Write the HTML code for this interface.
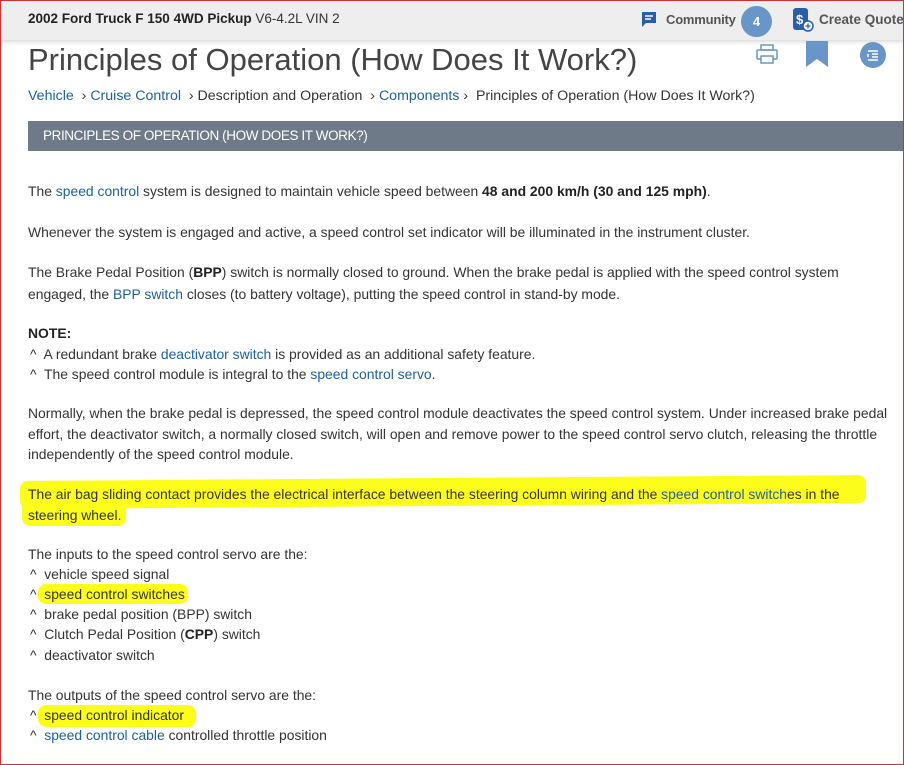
<!DOCTYPE html>
<html><head><style>
body{margin:0;width:904px;height:765px;overflow:hidden;background:#fff;font-family:"Liberation Sans",sans-serif;color:#333;position:relative}
.frame{position:absolute;left:0;top:0;width:902px;height:763px;border:1px solid #d03030;z-index:10;pointer-events:none}
.top{position:absolute;left:0;top:0;width:904px;height:40px;background:#eeeeee;box-shadow:0 2px 4px rgba(0,0,0,.15)}
.t{position:absolute;white-space:nowrap;font-size:13.9px;line-height:20px}
a{color:#1d5f9c;text-decoration:none}
.hl{position:absolute;background:#fdfd1c;border-radius:8px}
b{font-weight:bold;color:#222}
</style></head><body>
<div class="frame"></div>
<div class="top"></div>
<div class="t" style="left:28px;top:9px;font-size:13.5px;color:#333"><b>2002 Ford Truck F 150 4WD Pickup</b> V6-4.2L VIN 2</div>
<svg style="position:absolute;left:640px;top:10px" width="20" height="20" viewBox="0 0 20 20"><path d="M2 2h14v11H6l-4 4z" fill="#2a5ea8"/><path d="M5 6h8M5 9h6" stroke="#fff" stroke-width="1.5"/></svg>
<div class="t" style="left:666px;top:10px;font-weight:bold;color:#555;font-size:13px;letter-spacing:-0.2px">Community</div>
<div style="position:absolute;left:741px;top:6px;width:31px;height:31px;border-radius:50%;background:#6a95c9;color:#fff;font-size:13px;font-weight:bold;text-align:center;line-height:31px">4</div>
<svg style="position:absolute;left:791px;top:7px" width="26" height="26" viewBox="0 0 26 26"><rect x="2" y="1" width="15" height="22" rx="3" fill="#2a5ea8"/><text x="5" y="17" fill="#fff" font-size="13" font-family="Liberation Sans" font-weight="bold">$</text><circle cx="17" cy="19" r="5" fill="#fff" stroke="#2a5ea8" stroke-width="1.5"/><path d="M17 16.5v5M14.5 19h5" stroke="#2a5ea8" stroke-width="1.3"/></svg>
<div class="t" style="left:819px;top:10px;font-weight:bold;color:#555;font-size:13.5px">Create Quote</div>
<div class="t" style="left:28px;top:40px;font-size:31px;line-height:40px;font-weight:300;color:#444">Principles of Operation (How Does It Work?)</div>
<svg style="position:absolute;left:756px;top:44px" width="22" height="20" viewBox="0 0 22 20"><rect x="5" y="1" width="12" height="5" fill="none" stroke="#6a95c9" stroke-width="1.5"/><rect x="1" y="6" width="20" height="9" rx="1" fill="none" stroke="#6a95c9" stroke-width="1.5"/><rect x="5" y="12" width="12" height="7" fill="#fff" stroke="#6a95c9" stroke-width="1.5"/></svg>
<svg style="position:absolute;left:806px;top:41px" width="22" height="26" viewBox="0 0 22 26"><path d="M0 0h22v26l-11-8-11 8z" fill="#6a95c9"/></svg>
<div style="position:absolute;left:860px;top:42px;width:26px;height:26px;border-radius:50%;background:#6a95c9"></div>
<svg style="position:absolute;left:866px;top:48px" width="14" height="14" viewBox="0 0 14 14"><path d="M2 3h10M6 6h6M6 9h6M2 12h10M2 6v3" stroke="#fff" stroke-width="1.5"/></svg>
<div class="t" style="left:28px;top:86px;color:#333;font-size:14.2px"><a>Vehicle</a> &nbsp;&#x203A; <a>Cruise Control</a> &nbsp;&#x203A; Description and Operation &nbsp;&#x203A; <a>Components</a> &#x203A;&nbsp; Principles of Operation (How Does It Work?)</div>
<div style="position:absolute;left:28px;top:121px;width:876px;height:30px;background:#6e7a87"></div>
<div class="t" style="left:43px;top:126px;color:#fff;font-size:13.5px;letter-spacing:-0.4px">PRINCIPLES OF OPERATION (HOW DOES IT WORK?)</div>

<div class="hl" style="left:20px;top:478px;width:846px;height:28px;transform:rotate(-0.4deg)"></div>
<div class="hl" style="left:22px;top:500px;width:104px;height:26px"></div>
<div class="hl" style="left:38px;top:584px;width:150px;height:20px"></div>
<div class="hl" style="left:38px;top:705px;width:158px;height:22px"></div>

<div class="t" style="left:28px;top:181px">The <a>speed control</a> system is designed to maintain vehicle speed between <b>48 and 200 km/h (30 and 125 mph)</b>.</div>
<div class="t" style="left:28px;top:222px">Whenever the system is engaged and active, a speed control set indicator will be illuminated in the instrument cluster.</div>
<div class="t" style="left:28px;top:262px">The Brake Pedal Position (<b>BPP</b>) switch is normally closed to ground. When the brake pedal is applied with the speed control system</div>
<div class="t" style="left:28px;top:284px">engaged, the <a>BPP switch</a> closes (to battery voltage), putting the speed control in stand-by mode.</div>
<div class="t" style="left:28px;top:323px"><b>NOTE:</b></div>
<div class="t" style="left:30px;top:344px">^&nbsp; A redundant brake <a>deactivator switch</a> is provided as an additional safety feature.</div>
<div class="t" style="left:30px;top:364px">^&nbsp; The speed control module is integral to the <a>speed control servo</a>.</div>
<div class="t" style="left:28px;top:403px">Normally, when the brake pedal is depressed, the speed control module deactivates the speed control system. Under increased brake pedal</div>
<div class="t" style="left:28px;top:424px">effort, the deactivator switch, a normally closed switch, will open and remove power to the speed control servo clutch, releasing the throttle</div>
<div class="t" style="left:28px;top:444px">independently of the speed control module.</div>
<div class="t" style="left:28px;top:484px">The air bag sliding contact provides the electrical interface between the steering column wiring and the <a>speed control switch</a>es in the</div>
<div class="t" style="left:28px;top:505px">steering wheel.</div>
<div class="t" style="left:28px;top:544px">The inputs to the speed control servo are the:</div>
<div class="t" style="left:30px;top:564px">^&nbsp; vehicle speed signal</div>
<div class="t" style="left:30px;top:584px">^&nbsp; <span style="color:#333">speed control switches</span></div>
<div class="t" style="left:30px;top:604px">^&nbsp; brake pedal position (BPP) switch</div>
<div class="t" style="left:30px;top:624px">^&nbsp; Clutch Pedal Position (<b>CPP</b>) switch</div>
<div class="t" style="left:30px;top:645px">^&nbsp; deactivator switch</div>
<div class="t" style="left:28px;top:685px">The outputs of the speed control servo are the:</div>
<div class="t" style="left:30px;top:705px">^&nbsp; <span style="color:#333">speed control indicator</span></div>
<div class="t" style="left:30px;top:725px">^&nbsp; <a>speed control cable</a> controlled throttle position</div>
</body></html>
